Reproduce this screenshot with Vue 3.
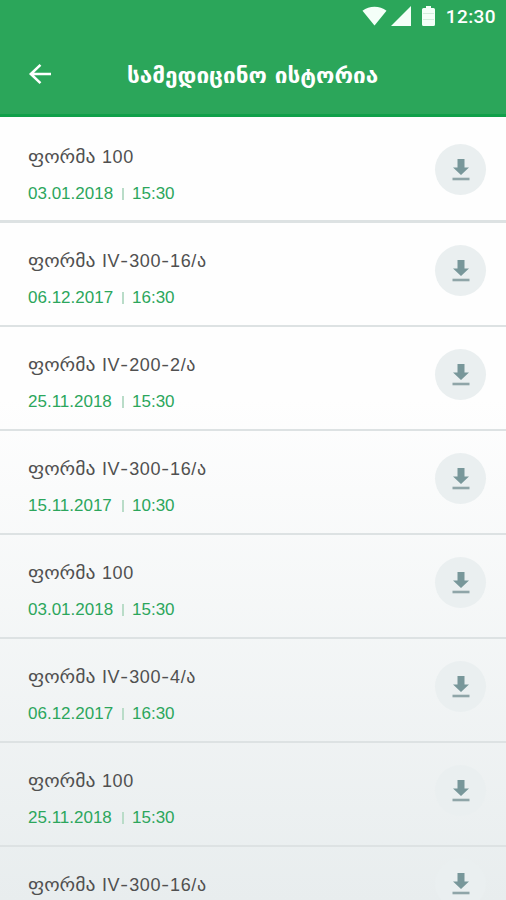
<template>
  <div class="screen">
    <header class="header">
      <div class="status-bar">
        <svg class="status-wifi" viewBox="0 0 26 20">
          <path d="M0.5 4.5C7.5-1 18.5-1 25.5 4.5L13 20z" />
        </svg>
        <svg class="status-signal" viewBox="0 0 20 20">
          <path d="M20 0V20H0z" />
        </svg>
        <svg class="status-battery" viewBox="0 0 13 20">
          <path d="M4 0h5v2h2.500a1.500 1.500 0 0 1 1.500 1.500v15a1.500 1.500 0 0 1-1.500 1.500h-10A1.500 1.500 0 0 1 0 18.500v-15A1.500 1.500 0 0 1 1.500 2H4z" />
          <path class="level" d="M1 7.500h11M1 13.500h11" />
        </svg>
        <span class="status-time">12:30</span>
      </div>

      <div class="toolbar">
        <button class="back" type="button" aria-label="Back">
          <svg viewBox="0 0 24 24">
            <path d="M12.500 2L2 12l10.500 10M2 12h22" />
          </svg>
        </button>
        <h1 class="title">სამედიცინო ისტორია</h1>
      </div>
    </header>

    <ul class="list">
      <li v-for="(item, index) in items" :key="index" class="item">
        <div class="item-body">
          <div class="item-name">
            <span class="geo word">ფორმა</span>
            <span class="code">
              <template v-for="(part, i) in item.code.split('-')" :key="i"><span v-if="i" class="dash">-</span>{{ part }}</template><span v-if="item.suffix" class="geo">{{ item.suffix }}</span>
            </span>
          </div>
          <div v-if="item.date" class="item-date">
            <span class="date">{{ item.date }}</span>
            <i class="separator"></i>
            <span>{{ item.time }}</span>
          </div>
        </div>
        <button class="download" type="button" aria-label="Download">
          <svg viewBox="0 0 18 22">
            <path class="arrow" d="M5.500 0h7v8.500H17L9 16 1 8.500h4.500z" />
            <path class="tray" d="M0.500 18.700h17v2.600h-17z" />
          </svg>
        </button>
      </li>
    </ul>
  </div>
</template>

<script setup>
const items = [
  { code: '100', date: '03.01.2018', time: '15:30' },
  { code: 'IV-300-16/', suffix: 'ა', date: '06.12.2017', time: '16:30' },
  { code: 'IV-200-2/', suffix: 'ა', date: '25.11.2018', time: '15:30' },
  { code: 'IV-300-16/', suffix: 'ა', date: '15.11.2017', time: '10:30' },
  { code: '100', date: '03.01.2018', time: '15:30' },
  { code: 'IV-300-4/', suffix: 'ა', date: '06.12.2017', time: '16:30' },
  { code: '100', date: '25.11.2018', time: '15:30' },
  { code: 'IV-300-16/', suffix: 'ა' },
];
</script>

<style>
body {
  margin: 0;
}
</style>

<style scoped>
.screen {
  display: flex;
  flex-direction: column;
  height: 900px;
  overflow: hidden;
  background: linear-gradient(#fefefe 0, #fefefe 400px, #e8edee 900px);
  font-family: 'Liberation Sans', 'DejaVu Sans', sans-serif;
}

.header {
  flex: none;
  box-sizing: border-box;
  height: 117px;
  border-bottom: 3px solid #10a04a;
  background: #2ba65a;
  color: #fff;
}

.status-bar {
  display: flex;
  align-items: center;
  justify-content: flex-end;
  height: 32px;
  padding-right: 10px;
}

.status-bar svg {
  height: 20px;
  fill: #f4fff8;
}

.status-bar .level {
  fill: none;
  stroke: #d3eedd;
}

.status-wifi {
  width: 25px;
}

.status-signal {
  width: 20px;
  margin-left: 4px;
}

.status-battery {
  width: 13px;
  margin-left: 11px;
}

.status-time {
  margin-left: 11px;
  font-family: Roboto, sans-serif;
  font-size: 19px;
  font-weight: 500;
  letter-spacing: 0.4px;
}

.toolbar {
  display: flex;
  align-items: center;
  height: 84px;
  padding-left: 28px;
}

.back,
.download {
  display: flex;
  align-items: center;
  justify-content: center;
  padding: 0;
  border: 0;
  background: none;
}

.back svg {
  width: 24px;
  height: 22px;
  fill: none;
  stroke: #fff;
  stroke-width: 2.8;
}

.title {
  margin: 4px 0 0 75px;
  font-family: 'DejaVu Sans', sans-serif;
  font-size: 21px;
  font-weight: 700;
  line-height: 28px;
  white-space: nowrap;
  transform: scaleX(1.073);
  transform-origin: left;
}

.list {
  margin: 0;
  padding: 2px 0 0;
  list-style: none;
}

.item {
  display: flex;
  align-items: flex-start;
  justify-content: space-between;
  box-sizing: border-box;
  height: 104px;
  padding: 25px 20px 0 28px;
  border-bottom: 2px solid #dde2e3;
}

.item:first-child {
  border-bottom-width: 3px;
}

.item-name {
  display: flex;
  align-items: baseline;
  height: 26px;
  color: #505050;
  font-size: 18px;
  line-height: 26px;
  white-space: nowrap;
}

.geo {
  font-family: 'DejaVu Sans', sans-serif;
  font-size: 18px;
}

.word {
  width: 68px;
  transform: scaleX(1.09);
  transform-origin: left;
}

.code {
  margin-left: 6px;
  letter-spacing: 0.6px;
}

.dash {
  display: inline-block;
  width: 9px;
  text-align: center;
  transform: scaleX(1.3);
}

.item-date {
  display: flex;
  align-items: center;
  height: 24px;
  margin-top: 12px;
  color: #2ca65c;
  font-size: 17px;
  line-height: 24px;
}

.date {
  width: 85px;
}

.separator {
  width: 2px;
  height: 12px;
  margin: 0 8px 0 9px;
  background: #b9dcc8;
}

.download {
  width: 51px;
  height: 51px;
  margin-top: -3px;
  border-radius: 50%;
  background: #eaeff0;
}

.item:first-child .download {
  margin-top: 0;
}

.item:last-child .download {
  margin-top: -14px;
}

.download svg {
  width: 18px;
  height: 22px;
}

.arrow {
  fill: #78979a;
}

.tray {
  fill: #8fa5a8;
}
</style>
